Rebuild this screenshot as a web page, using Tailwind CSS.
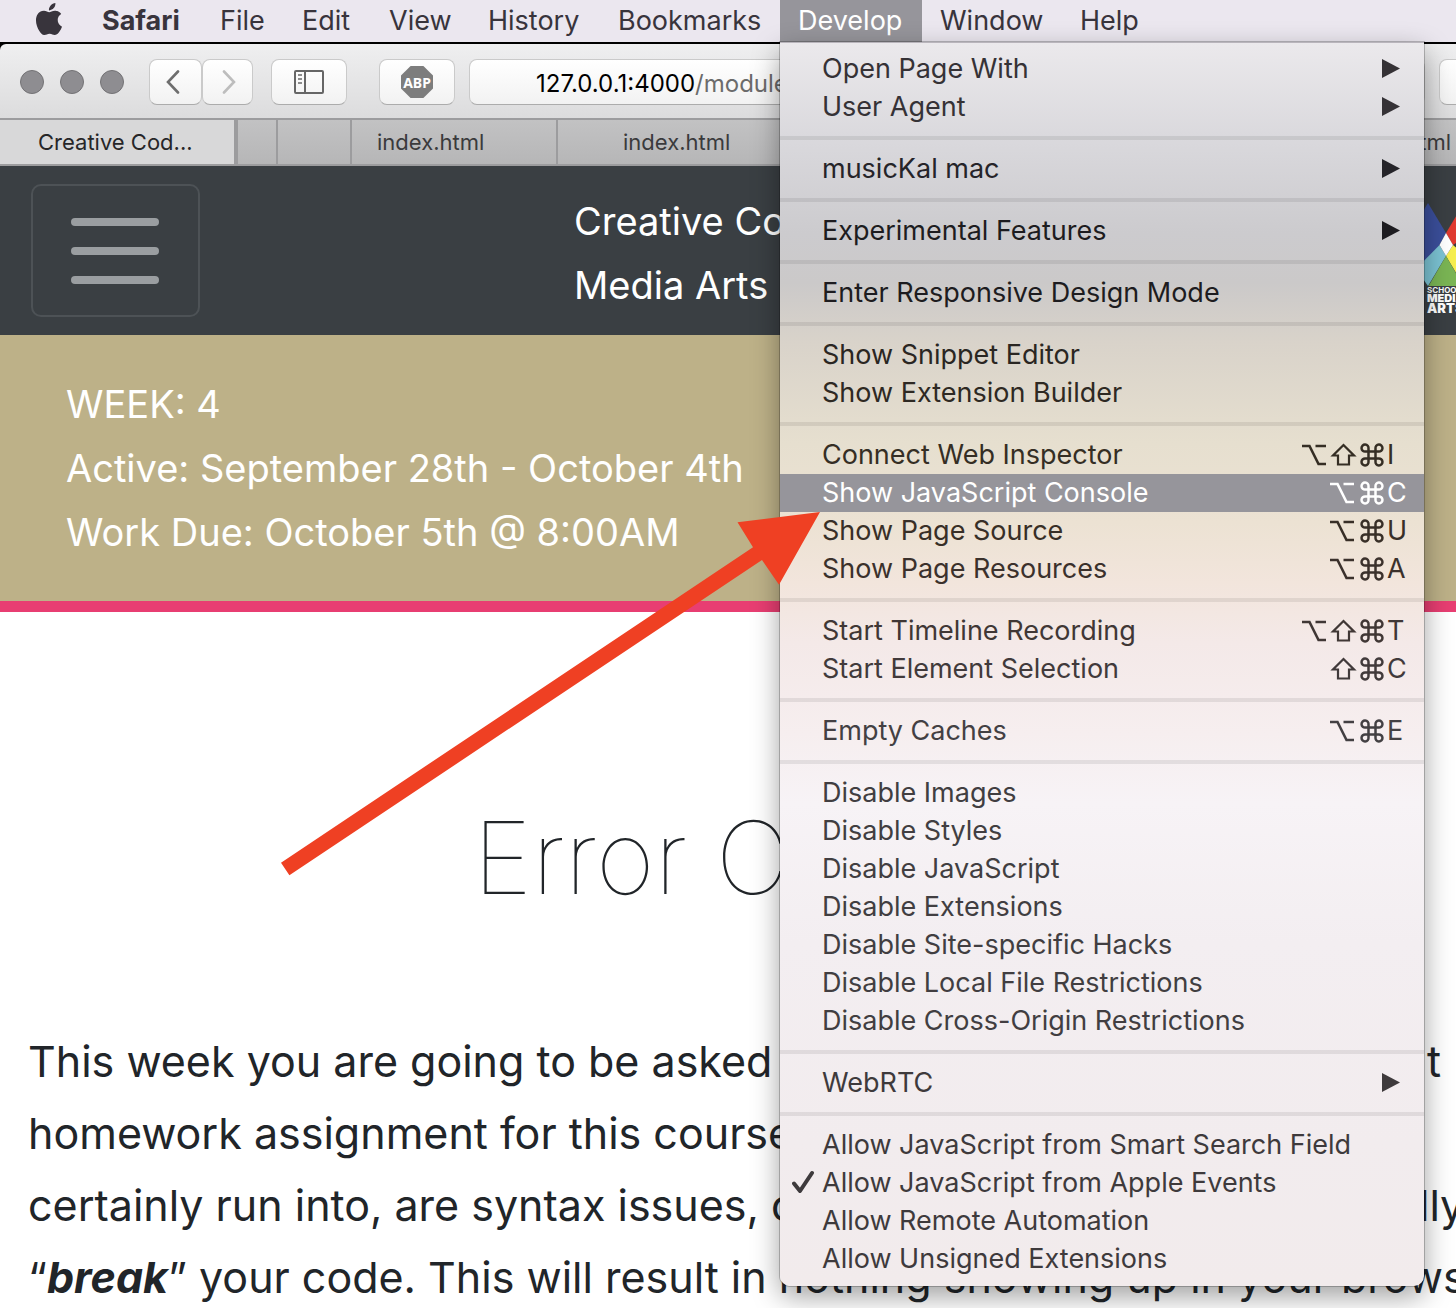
<!DOCTYPE html>
<html lang="en">
<head>
<meta charset="utf-8">
<title>Creative Coding</title>
<script src="https://cdn.jsdelivr.net/npm/@tailwindcss/browser@4"></script>
</head>
<body class="font-[Inter,'Liberation_Sans',sans-serif] text-[#212529] bg-white">
<svg class="hidden">
  <symbol id="opt" viewBox="0 0 28 24"><path d="M2 3H9.500L18.500 21H26M15.500 3H26" fill="none" stroke="currentColor" stroke-width="2.600"/></symbol>
  <symbol id="shift" viewBox="0 0 28 24"><path d="M13.500 2L24 12.500H19V21.500H8V12.500H3Z" fill="none" stroke="currentColor" stroke-width="2.200"/></symbol>
  <symbol id="cmd" viewBox="0 0 28 24"><path d="M10.500 8.500H17.500V15.500H10.500ZM10.500 8.500H7.500A3.500 3.500 0 1 1 10.500 5.500ZM17.500 8.500V5.500A3.500 3.500 0 1 1 20.500 8.500ZM17.500 15.500H20.500A3.500 3.500 0 1 1 17.500 18.500ZM10.500 15.500V18.500A3.500 3.500 0 1 1 7.500 15.500Z" fill="none" stroke="currentColor" stroke-width="2.500"/></symbol>
  <symbol id="tri" viewBox="0 0 18 20"><path d="M0 0L18 9.500L0 19Z" fill="currentColor"/></symbol>
</svg>
<div class="relative h-screen overflow-hidden flex flex-col">

  <!-- System menu bar -->
  <nav class="relative z-10 flex h-[42px] shrink-0 bg-[#ebe7ef] text-[27px] leading-[40px] text-[#38343c] [&>button]:shrink-0 [&>button]:pl-[18px] [&>button]:text-left">
    <button aria-label="Apple" class="w-[84px]"><svg class="w-8 h-8 ml-[15px] -mt-1" viewBox="0 0 24 24" fill="currentColor"><path d="M12.152 6.896c-.948 0-2.415-1.078-3.960-1.040-2.040.027-3.910 1.183-4.961 3.014-2.117 3.675-.546 9.103 1.519 12.090 1.013 1.454 2.208 3.090 3.792 3.039 1.520-.065 2.090-.987 3.935-.987 1.831 0 2.350.987 3.960.948 1.637-.026 2.676-1.480 3.676-2.948 1.156-1.688 1.636-3.325 1.662-3.415-.039-.013-3.182-1.221-3.220-4.857-.026-3.040 2.480-4.494 2.597-4.559-1.429-2.090-3.623-2.324-4.390-2.376-2-.156-3.675 1.090-4.610 1.090zM15.530 3.830c.843-1.012 1.400-2.427 1.245-3.830-1.207.052-2.662.805-3.532 1.818-.780.896-1.454 2.338-1.273 3.714 1.338.104 2.715-.688 3.559-1.701"/></svg></button>
    <button class="w-[118px] font-bold">Safari</button>
    <button class="w-[82px]">File</button>
    <button class="w-[87px]">Edit</button>
    <button class="w-[99px]">View</button>
    <button class="w-[130px]">History</button>
    <button class="w-[180px]">Bookmarks</button>
    <div class="relative w-[142px] shrink-0">
      <button class="h-[42px] w-full bg-[#96959b] pl-[18px] text-left text-white">Develop</button>
      <ul class="absolute left-0 top-full w-[644px] rounded-b-[10px] border-t border-[#b9b5bc] pt-[7px] pb-2 text-[27px] leading-[38px] text-[#353236] shadow-[0_0_0_1px_rgba(0,0,0,0.22),0_10px_28px_rgba(0,0,0,0.38)] bg-[linear-gradient(180deg,#ebe9ec_0px,#d9d8dc_100px,#cccbce_190px,#cbc9c9_240px,#d9d3ca_300px,#e6dfcf_400px,#ece2d3_480px,#f2e5dc_540px,#f4e9e8_600px,#f6eeef_690px,#f7f3f6_760px,#f3eef1_900px,#f2ecee_1100px,#f2ebec_1240px)] [&_button]:flex [&_button]:h-[38px] [&_button]:w-full [&_button]:items-center [&_button]:pl-[42px] [&_span]:ml-auto [&_span]:flex [&_span]:items-center [&_span_svg]:h-6 [&_span_svg]:w-7 [&_b]:w-[38px] [&_b]:pl-px [&_b]:text-left [&_b]:font-normal">
        <li><button>Open Page With<svg class="ml-auto mr-6 h-5 w-[18px]"><use href="#tri"/></svg></button></li>
        <li><button>User Agent<svg class="ml-auto mr-6 h-5 w-[18px]"><use href="#tri"/></svg></button></li>
        <li class="h-6 pt-[10px]"><div class="h-1 bg-black/8"></div></li>
        <li><button class="text-[#252429]">musicKal mac<svg class="ml-auto mr-6 h-5 w-[18px]"><use href="#tri"/></svg></button></li>
        <li class="h-6 pt-[10px]"><div class="h-1 bg-black/8"></div></li>
        <li><button class="text-[#1d1c20]">Experimental Features<svg class="ml-auto mr-6 h-5 w-[18px]"><use href="#tri"/></svg></button></li>
        <li class="h-6 pt-[10px]"><div class="h-1 bg-black/8"></div></li>
        <li><button class="text-[#1d1c20]">Enter Responsive Design Mode</button></li>
        <li class="h-6 pt-[10px]"><div class="h-1 bg-black/8"></div></li>
        <li><button class="text-[#2a2622]">Show Snippet Editor</button></li>
        <li><button class="text-[#2e2923]">Show Extension Builder</button></li>
        <li class="h-6 pt-[10px]"><div class="h-1 bg-black/8"></div></li>
        <li><button class="text-[#352e24]">Connect Web Inspector<span><svg><use href="#opt"/></svg><svg class="ml-[2px]"><use href="#shift"/></svg><svg><use href="#cmd"/></svg><b>I</b></span></button></li>
        <li><button class="bg-[#96959b] text-white">Show JavaScript Console<span><svg><use href="#opt"/></svg><svg class="ml-[2px]"><use href="#cmd"/></svg><b>C</b></span></button></li>
        <li><button class="text-[#382f27]">Show Page Source<span><svg><use href="#opt"/></svg><svg class="ml-[2px]"><use href="#cmd"/></svg><b>U</b></span></button></li>
        <li><button class="text-[#3b312c]">Show Page Resources<span><svg><use href="#opt"/></svg><svg class="ml-[2px]"><use href="#cmd"/></svg><b>A</b></span></button></li>
        <li class="h-6 pt-[10px]"><div class="h-1 bg-black/8"></div></li>
        <li><button class="text-[#403735]">Start Timeline Recording<span><svg><use href="#opt"/></svg><svg class="ml-[2px]"><use href="#shift"/></svg><svg><use href="#cmd"/></svg><b>T</b></span></button></li>
        <li><button class="text-[#413a3b]">Start Element Selection<span><svg><use href="#shift"/></svg><svg><use href="#cmd"/></svg><b>C</b></span></button></li>
        <li class="h-6 pt-[10px]"><div class="h-1 bg-black/8"></div></li>
        <li><button class="text-[#434043]">Empty Caches<span><svg><use href="#opt"/></svg><svg class="ml-[2px]"><use href="#cmd"/></svg><b>E</b></span></button></li>
        <li class="h-6 pt-[10px]"><div class="h-1 bg-black/8"></div></li>
        <li><button class="text-[#413e41]">Disable Images</button></li>
        <li><button class="text-[#413e41]">Disable Styles</button></li>
        <li><button class="text-[#413e41]">Disable JavaScript</button></li>
        <li><button class="text-[#413e41]">Disable Extensions</button></li>
        <li><button class="text-[#413e41]">Disable Site-specific Hacks</button></li>
        <li><button class="text-[#413e41]">Disable Local File Restrictions</button></li>
        <li><button class="text-[#413e41]">Disable Cross-Origin Restrictions</button></li>
        <li class="h-6 pt-[10px]"><div class="h-1 bg-black/8"></div></li>
        <li><button class="text-[#3e3a3c]">WebRTC<svg class="ml-auto mr-6 h-5 w-[18px]"><use href="#tri"/></svg></button></li>
        <li class="h-6 pt-[10px]"><div class="h-1 bg-black/8"></div></li>
        <li><button class="text-[#3e3a3c]">Allow JavaScript from Smart Search Field</button></li>
        <li class="relative"><svg class="absolute left-3 top-[6px] h-6 w-6" viewBox="0 0 24 24" fill="none" stroke="#3e3a3c" stroke-width="4" stroke-linecap="round" stroke-linejoin="round"><path d="M2 13.500L8 21L20 3"/></svg><button class="text-[#3e3a3c]">Allow JavaScript from Apple Events</button></li>
        <li><button class="text-[#3e3a3c]">Allow Remote Automation</button></li>
        <li><button class="text-[#3e3a3c]">Allow Unsigned Extensions</button></li>
      </ul>
    </div>
    <button class="w-[140px]">Window</button>
    <button class="w-[100px]">Help</button>
  </nav>

  <!-- Browser toolbar -->
  <div class="shrink-0 border-t-2 border-black bg-black">
    <div class="flex h-[74px] items-center overflow-hidden rounded-tl-[6px] bg-linear-to-b from-[#efeff0] to-[#dcdcdd] pt-[2px] pl-5 [&>button]:flex [&>button]:h-[46px] [&>button]:shrink-0 [&>button]:items-center [&>button]:justify-center [&>button]:rounded-[8px] [&>button]:border [&>button]:border-[#cacaca] [&>button]:border-b-[#acacac] [&>button]:bg-linear-to-b [&>button]:from-white [&>button]:to-[#f2f2f2]">
      <i class="size-6 shrink-0 rounded-full border border-[#737275] bg-[#8e8d91]"></i>
      <i class="ml-4 size-6 shrink-0 rounded-full border border-[#737275] bg-[#8e8d91]"></i>
      <i class="ml-4 size-6 shrink-0 rounded-full border border-[#737275] bg-[#8e8d91]"></i>
      <button aria-label="Back" class="ml-[25px] w-[53px] pr-[5px]"><svg class="h-6 w-[14px]" viewBox="0 0 14 24" fill="none" stroke="#6e6e6e" stroke-width="2.600" stroke-linecap="round"><path d="M12 1.500L2 12L12 22.500"/></svg></button>
      <button aria-label="Forward" class="w-[51px] pl-[2px]"><svg class="h-6 w-[14px]" viewBox="0 0 14 24" fill="none" stroke="#bdbdbd" stroke-width="2.600" stroke-linecap="round"><path d="M2 1.500L12 12L2 22.500"/></svg></button>
      <button aria-label="Sidebar" class="ml-[18px] w-[76px]"><svg class="h-6 w-[30px]" viewBox="0 0 30 24" fill="none" stroke="#666" stroke-width="2"><rect x="1" y="1" width="28" height="22" rx="1"/><path d="M11 1V23"/><path d="M4 5H8M4 9H8M4 13H8" stroke="#8c8c8c"/></svg></button>
      <button aria-label="Adblock Plus" class="ml-8 w-[76px]"><span class="flex size-8 items-center justify-center bg-[#7d7d7d] font-['Noto_Sans',sans-serif] text-[14px] font-bold text-white [clip-path:polygon(30%_0,70%_0,100%_30%,100%_70%,70%_100%,30%_100%,0_70%,0_30%)]">ABP</span></button>
      <label class="ml-[14px] flex h-[46px] flex-1 items-center rounded-[8px] border border-[#cacaca] border-b-[#acacac] bg-linear-to-b from-white to-[#f2f2f2] pt-[3px] pl-[66px] text-[24px] text-black"><span>127.0.0.1:4000</span><input aria-label="Address" class="flex-1 text-[#6b6b6b]" value="/modules/week-4/"></label>
      <button aria-label="Share" class="ml-[14px] -mr-[59px] w-[76px]"></button>
    </div>
    <div class="flex h-12 overflow-hidden border-y-2 border-[#9c9c9e] bg-linear-to-b from-[#c2c2c3] to-[#b6b6b7] text-[22px] leading-[44px] text-[#3a3a3c] [&>a]:shrink-0">
      <a href="#" class="w-[238px] border-r-4 border-[#9c9c9e] bg-[#d8d8d9] pl-[38px] text-[#262628]">Creative Cod...</a>
      <a href="#" aria-label="Tab" class="w-10 border-r-2 border-[#9c9c9e]"></a>
      <a href="#" aria-label="Tab" class="w-[74px] border-r-2 border-[#9c9c9e]"></a>
      <a href="#" class="w-[206px] border-r-2 border-[#9c9c9e] pl-[25px]">index.html</a>
      <a href="#" class="w-[246px] border-r-2 border-[#9c9c9e] pl-[65px]">index.html</a>
      <a href="#" class="ml-auto pr-[5px]">index.html</a>
    </div>
  </div>

  <!-- Page header -->
  <header class="flex h-[169px] shrink-0 items-center bg-[#3a3f43] pl-[31px] text-[38px] leading-[64px] text-white">
    <button aria-label="Toggle navigation" class="flex h-[133px] w-[169px] shrink-0 flex-col items-center justify-center gap-[21px] rounded-[10px] border-2 border-[#4d5256] pr-[2px] [&>i]:h-2 [&>i]:w-[88px] [&>i]:rounded-full [&>i]:bg-[#9a9ea1]"><i></i><i></i><i></i></button>
    <p class="mt-1 ml-[374px] h-32 w-[212px] shrink-0 whitespace-nowrap">Creative Co<br>Media Arts</p>
    <div class="mt-5 ml-auto h-[130px] w-[34px] shrink-0 overflow-hidden font-black text-white">
      <svg class="h-[90px] w-[34px]" viewBox="0 0 34 90"><path d="M6 7L24 37L17.500 49L2 73L-20 49Z" fill="#3b4f9b"/><path d="M24 37L42 7L60 30L31 49Z" fill="#e03a30"/><path d="M17.500 49L24 60L6 90L-6 73Z" fill="#7cc4d4"/><path d="M31 49L24 60L42 90L60 73Z" fill="#f6ee4f"/><path d="M24 60L6 91H42Z" fill="#7ab554"/><path d="M24 37L31 49L24 60L17.500 49Z" fill="#fff"/></svg>
      <div class="pl-[5px] text-[8px] leading-[8px] font-bold">SCHOOL</div>
      <div class="pl-[5px] text-[11px] leading-[9px]">MEDIA</div>
      <div class="pl-[5px] text-[13px] leading-[11px]">ARTS</div>
    </div>
  </header>
  <section class="h-[277px] shrink-0 border-b-[11px] border-[#e83e72] bg-[#bdb188] pt-[37px] pl-[66px] text-[38px] leading-[64px] text-white">
    <p>WEEK: 4</p>
    <p>Active: September 28th - October 4th</p>
    <p>Work Due: October 5th @ 8:00AM</p>
  </section>
  <main class="shrink-0 whitespace-nowrap text-[43px] leading-[72px]">
    <h1 class="pt-[180px] pl-[473px] text-[101px] leading-[130px] font-thin">Error C</h1>
    <div class="mt-[103px] pl-7">
      <div class="flex"><p class="flex-1">This week you are going to be asked</p><p class="pr-[15px]">t</p></div>
      <p>homework assignment for this course</p>
      <div class="flex"><p class="w-[1391px] shrink-0">certainly run into, are syntax issues, o</p><p>lly</p></div>
      <p>“<b><i>break</i></b>” your code. This will result in nothing showing up in your browser</p>
    </div>
  </main>

  <!-- Annotation arrow -->
  <svg class="pointer-events-none absolute left-[280px] top-[510px] z-20 h-[368px] w-[542px]" viewBox="280 510 542 368"><path d="M820 512L737.500 522.300L753 547.300L281 862.700L289.400 875.300L762 560L779 584.700Z" fill="#ef4023"/></svg>
</div>
</body>
</html>
